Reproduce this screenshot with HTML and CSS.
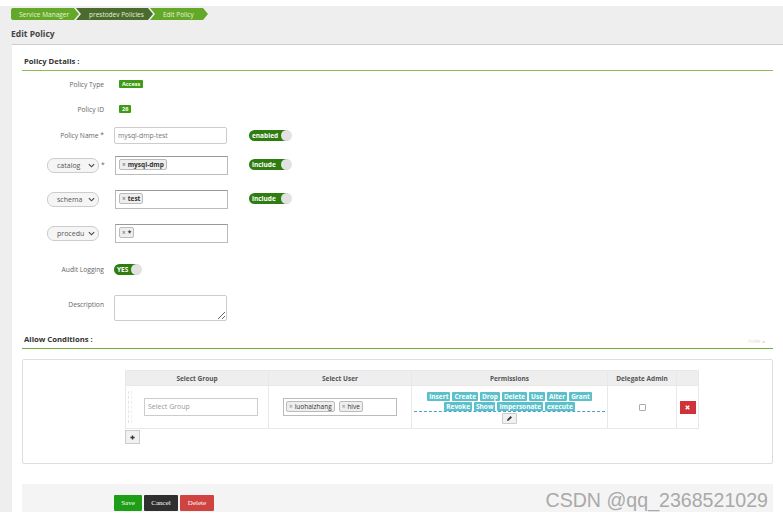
FILE: index.html
```html
<!DOCTYPE html>
<html lang="en">
<head>
    <meta charset="UTF-8">
    <meta name="viewport" content="width=device-width, initial-scale=1.0">
    <title>Edit Policy</title>
    <link rel="stylesheet" href="styles.css">
</head>
<body>
    <div class="page">
        <div class="crumbs">
            <a class="crumb first">Service Manager</a>
            <a class="crumb dark">prestodev Policies</a>
            <a class="crumb">Edit Policy</a>
        </div>
        <h1 class="page-title">Edit Policy</h1>

        <div class="panel">
            <h2 class="section-title details-title">Policy Details :</h2>

            <div class="row type-row">
                <div class="row-label">Policy Type</div>
                <span class="label-green">Access</span>
            </div>
            <div class="row id-row">
                <div class="row-label">Policy ID</div>
                <span class="label-green">26</span>
            </div>
            <div class="row name-row">
                <div class="row-label">Policy Name *</div>
                <input class="text-input" type="text" value="mysql-dmp-test">
                <div class="switch"><span>enabled</span><i></i></div>
            </div>
            <div class="row res-row catalog-row">
                <div class="row-label">
                    <div class="fake-select">catalog<svg viewBox="0 0 8 5"><path d="M1 1l3 3 3-3"/></svg></div><b>*</b>
                </div>
                <div class="tag-input"><span class="tag strong"><em>×</em>mysql-dmp</span></div>
                <div class="switch"><span>include</span><i></i></div>
            </div>
            <div class="row res-row schema-row">
                <div class="row-label">
                    <div class="fake-select">schema<svg viewBox="0 0 8 5"><path d="M1 1l3 3 3-3"/></svg></div><b class="blank">*</b>
                </div>
                <div class="tag-input"><span class="tag strong"><em>×</em>test</span></div>
                <div class="switch"><span>include</span><i></i></div>
            </div>
            <div class="row res-row proc-row">
                <div class="row-label">
                    <div class="fake-select">procedu<svg viewBox="0 0 8 5"><path d="M1 1l3 3 3-3"/></svg></div><b class="blank">*</b>
                </div>
                <div class="tag-input"><span class="tag strong"><em>×</em>*</span></div>
            </div>
            <div class="row audit-row">
                <div class="row-label">Audit Logging</div>
                <div class="switch small"><span>YES</span><i></i></div>
            </div>
            <div class="row desc-row">
                <div class="row-label">Description</div>
                <textarea class="desc-input"></textarea>
            </div>

            <div class="allow-head">
                <h2 class="section-title">Allow Conditions :</h2>
                <span class="hide-link">hide ▴</span>
            </div>

            <div class="cond-box">
                <table class="cond-table">
                    <tr>
                        <th class="col-group">Select Group</th>
                        <th class="col-user">Select User</th>
                        <th class="col-perm">Permissions</th>
                        <th class="col-admin">Delegate Admin</th>
                        <th class="col-del"></th>
                    </tr>
                    <tr>
                        <td>
                            <div class="group-wrap">
                                <span class="drag-mark"></span>
                                <div class="group-input">Select Group</div>
                            </div>
                        </td>
                        <td>
                            <div class="user-input">
                                <span class="tag"><em>×</em>luohaizhang</span>
                                <span class="tag"><em>×</em>hive</span>
                            </div>
                        </td>
                        <td class="perm-cell">
                            <div class="perm-list">
                                <span>Insert</span><span>Create</span><span>Drop</span><span>Delete</span><span>Use</span><span>Alter</span><span>Grant</span><span>Revoke</span><span>Show</span><span>Impersonate</span><span>execute</span>
                            </div>
                            <div class="perm-edit">
                                <svg viewBox="0 0 10 10"><path d="M1.5 8.5l.5-2.4 4.6-4.6 1.9 1.9L3.9 8z"/></svg>
                            </div>
                        </td>
                        <td class="center"><input class="admin-check" type="checkbox"></td>
                        <td class="center">
                            <div class="del-btn">
                                <svg viewBox="0 0 10 10"><path d="M2.5 2.5l5 5M7.5 2.5l-5 5"/></svg>
                            </div>
                        </td>
                    </tr>
                </table>
                <div class="add-btn">
                    <svg viewBox="0 0 10 10"><path d="M5 2v6M2 5h6"/></svg>
                </div>
            </div>

            <div class="actions">
                <a class="btn btn-save">Save</a>
                <a class="btn btn-cancel">Cancel</a>
                <a class="btn btn-delete">Delete</a>
            </div>
        </div>
    </div>
    <div class="watermark">CSDN @qq_2368521029</div>
</body>
</html>
```

FILE: styles.css
```css
html, body {
    margin: 0;
    background: #fff;
}
body {
    width: 783px;
    height: 519px;
    overflow: hidden;
    position: relative;
    font-family: 'Open Sans', sans-serif;
    font-size: 7px;
    color: #555;
}
.page {
    margin-top: 6px;
    height: 506px;
    background: #eee;
    overflow: hidden;
}
.crumbs {
    display: flex;
    height: 12px;
    margin: 2px 0 0 11px;
}
.crumb {
    display: flex;
    align-items: center;
    height: 12px;
    box-sizing: border-box;
    width: 68px;
    margin-right: -3px;
    padding-left: 13px;
    background: #64a82a;
    color: #e6f2d8;
    font-size: 6.5px;
    clip-path: polygon(0 0, calc(100% - 5px) 0, 100% 50%, calc(100% - 5px) 100%, 0 100%, 5px 50%);
}
.crumb.first {
    width: 68px;
    padding-left: 8px;
    clip-path: polygon(0 0, calc(100% - 5px) 0, 100% 50%, calc(100% - 5px) 100%, 0 100%);
    border-radius: 2px 0 0 2px;
}
.crumb.dark {
    width: 77px;
    background: #4b6b2e;
}
.crumb:last-child {
    width: 58px;
}
.page-title {
    margin: 8px 0 0 11px;
    height: 16px;
    font-size: 8.5px;
    line-height: 12px;
    font-weight: 700;
    color: #444;
}
.panel {
    height: 468px;
    margin-left: 12px;
    padding: 0 10px;
    background: #fff;
    border-top: 1px solid #ccc;
}
.section-title {
    margin: 0;
    font-size: 7.7px;
    line-height: 11px;
    font-weight: 700;
    color: #333;
    padding-left: 2px;
}
.details-title {
    padding-top: 11px;
    padding-bottom: 3px;
    border-bottom: 1px solid #8dbb5c;
}
.row {
    display: flex;
    align-items: center;
}
.row-label {
    width: 82px;
    flex: none;
    margin-right: 10px;
    text-align: right;
    color: #666;
    font-size: 6.7px;
}
.type-row { height: 12px; margin-top: 7px; }
.id-row { height: 12px; margin-top: 13px; }
.name-row { height: 17px; margin-top: 12px; }
.res-row { height: 19px; align-items: flex-start; }
.catalog-row { margin-top: 12px; }
.schema-row { margin-top: 15px; }
.proc-row { margin-top: 15px; }
.audit-row { height: 12px; margin-top: 20px; }
.desc-row { height: 27px; margin-top: 20px; align-items: flex-start; }
.desc-row .row-label { padding-top: 5px; }
.label-green {
    margin-left: 5px;
    background: #3f9a16;
    color: #fff;
    font-size: 5.5px;
    font-weight: 700;
    line-height: 8px;
    padding: 0 3px;
    border-radius: 1px;
}
.text-input {
    width: 113px;
    height: 17px;
    box-sizing: border-box;
    padding: 0 3px;
    border: 1px solid #ccc;
    border-radius: 2px;
    font-family: inherit;
    font-size: 6.8px;
    color: #777;
}
.switch {
    position: relative;
    width: 42px;
    height: 11px;
    margin-left: 22px;
    box-sizing: border-box;
    padding-left: 3px;
    background: #2f7d10;
    border-radius: 6px;
    color: #fff;
    font-size: 6.5px;
    font-weight: 700;
    line-height: 11px;
}
.switch i {
    position: absolute;
    right: -1px;
    top: 0;
    width: 11px;
    height: 11px;
    border-radius: 50%;
    background: #e2e2e2;
}
.switch.small {
    width: 27px;
    margin-left: 0;
}
.res-row .switch {
    margin-left: 21px;
    margin-top: 3px;
}
.res-row .row-label {
    display: flex;
    align-items: center;
    padding-left: 25px;
    margin-right: 0;
    width: 68px;
    height: 19px;
    text-align: left;
    margin-left: 0;
}
.row-label b {
    font-weight: 400;
    margin-left: 2px;
}
.row-label .blank {
    visibility: hidden;
}
.fake-select {
    display: flex;
    align-items: center;
    justify-content: space-between;
    width: 52px;
    height: 15px;
    flex: none;
    box-sizing: border-box;
    padding: 0 3px 0 9px;
    border: 1px solid #ccc;
    border-radius: 7px;
    background: #f5f5f5;
    font-size: 7px;
    color: #555;
}
.fake-select svg {
    width: 7px;
    height: 5px;
    fill: none;
    stroke: #444;
    stroke-width: 1.3;
}
.tag-input {
    width: 113px;
    height: 19px;
    box-sizing: border-box;
    padding: 2px 3px;
    border: 1px solid #bbb;
    border-top-color: #999;
}
.tag {
    display: inline-block;
    flex: none;
    height: 10px;
    line-height: 9px;
    box-sizing: border-box;
    padding: 0 2px;
    border: 1px solid #bbb;
    border-radius: 2px;
    background: #eee;
    font-size: 6.5px;
    color: #333;
}
.tag.strong { font-weight: 700; height: 11px; line-height: 10px; }
.tag em {
    font-style: normal;
    color: #888;
    margin-right: 2px;
}
.desc-input {
    display: block;
    width: 113px;
    height: 26px;
    box-sizing: border-box;
    margin: 0;
    border: 1px solid #ccc;
    border-radius: 2px;
}
.allow-head {
    display: flex;
    justify-content: space-between;
    align-items: flex-end;
    margin-top: 12px;
    padding-bottom: 3px;
    border-bottom: 1px solid #72ac36;
}
.hide-link {
    font-size: 6px;
    color: #ddd;
    margin-right: 8px;
}
.cond-box {
    height: 105px;
    margin-top: 10px;
    box-sizing: border-box;
    padding: 10px 0 0 102px;
    border: 1px solid #ddd;
    border-radius: 2px;
}
.cond-table {
    width: 573px;
    table-layout: fixed;
    border-collapse: collapse;
}
.cond-table th, .cond-table td {
    box-sizing: border-box;
    border: 1px solid #e8e8e8;
    padding: 0;
}
.cond-table th {
    height: 15px;
    background: #eee;
    font-size: 6.5px;
    font-weight: 700;
    color: #555;
}
.cond-table td {
    height: 43px;
    vertical-align: middle;
}
.col-group, .col-user { width: 143px; }
.col-perm { width: 196px; }
.col-admin { width: 69px; }
.col-del { width: 22px; }
.group-wrap {
    display: flex;
    align-items: center;
    padding-left: 2px;
}
.drag-mark {
    width: 2px;
    height: 32px;
    border-left: 1px dashed #e4e4e4;
    border-right: 1px dashed #eee;
}
.group-input {
    width: 114px;
    height: 18px;
    box-sizing: border-box;
    margin-left: 12px;
    padding-left: 3px;
    line-height: 16px;
    border: 1px solid #ccc;
    color: #999;
    font-size: 7px;
}
.user-input {
    display: flex;
    gap: 4px;
    width: 114px;
    height: 18px;
    box-sizing: border-box;
    margin-left: 14px;
    padding: 2px;
    border: 1px solid #bbb;
}
.user-input .tag {
    height: 11px;
    line-height: 9px;
    font-weight: 400;
}
.perm-cell {
    text-align: center;
}
.perm-list {
    display: flex;
    flex-wrap: wrap;
    justify-content: center;
    gap: 1px 2px;
    margin: 2px 2px 0;
    border-bottom: 1px dashed #4a9fc9;
}
.perm-list span {
    background: #5bc0ca;
    color: #fff;
    font-size: 6.5px;
    font-weight: 700;
    line-height: 9px;
    padding: 0 2px;
    border-radius: 1px;
}
.perm-edit {
    width: 15px;
    height: 11px;
    box-sizing: border-box;
    margin: 1px auto 0;
    background: #f1f1f1;
    border: 1px solid #ccc;
    border-radius: 1px;
    display: flex;
    align-items: center;
    justify-content: center;
}
.perm-edit svg {
    width: 7px;
    height: 7px;
    fill: #333;
}
.center { text-align: center; }
.admin-check {
    appearance: none;
    display: block;
    width: 7px;
    height: 7px;
    margin: 0 auto;
    border: 1px solid #aaa;
    border-radius: 1px;
    background: #fff;
}
.del-btn {
    width: 16px;
    height: 13px;
    margin: 0 auto;
    background: #cf3339;
    display: flex;
    align-items: center;
    justify-content: center;
}
.del-btn svg {
    width: 7px;
    height: 7px;
    stroke: #fff;
    stroke-width: 2;
}
.add-btn {
    width: 15px;
    height: 14px;
    margin-top: 1px;
    box-sizing: border-box;
    background: #f1f1f1;
    border: 1px solid #ccc;
    display: flex;
    align-items: center;
    justify-content: center;
}
.add-btn svg {
    width: 7px;
    height: 7px;
    stroke: #333;
    stroke-width: 2;
}
.actions {
    display: flex;
    gap: 2px;
    height: 28px;
    box-sizing: border-box;
    margin-top: 20px;
    padding: 11px 0 0 92px;
    background: #f4f4f4;
}
.btn {
    height: 16px;
    line-height: 16px;
    color: #fff;
    text-align: center;
    font-size: 7px;
    font-family: 'Liberation Serif', serif;
    border-radius: 1px;
}
.btn-save { width: 28px; background: #1e9e17; }
.btn-cancel { width: 34px; background: #2f2f2f; }
.btn-delete { width: 34px; background: #cf4440; }
.watermark {
    position: absolute;
    right: 15px;
    top: 488px;
    font-family: 'Liberation Sans', sans-serif;
    font-size: 19.6px;
    line-height: 24px;
    color: #a9a9a9;
}
```
